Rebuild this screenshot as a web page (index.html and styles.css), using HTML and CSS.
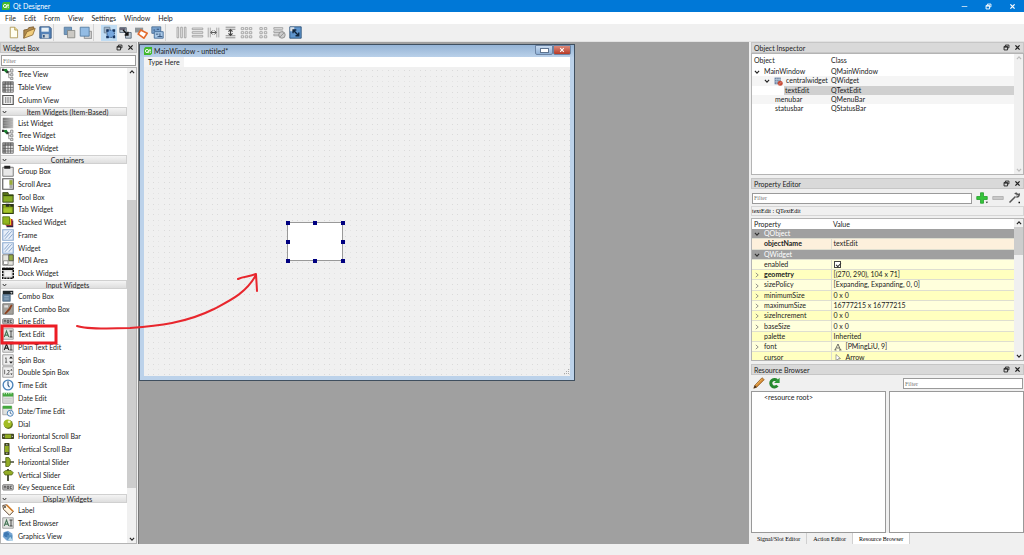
FILE: index.html
```html
<!DOCTYPE html>
<html lang="en">
<head>
  <meta charset="UTF-8" />
  <meta name="viewport" content="width=device-width, initial-scale=1.0"/>
  <title>Qt Designer</title>
  <link rel="stylesheet" href="styles.css">
</head>
<body>

<!-- icon sprites -->
<svg class="sprites" aria-hidden="true">
  <symbol id="qt" viewBox="0 0 16 16"><path fill="#41b82c" d="M3 0h13v13l-3 3H0V3z"/><circle cx="6" cy="8" r="3.2" fill="none" stroke="#fff" stroke-width="1.8"/><path d="M7 9l2.5 3.5M12 4v6.500q0 1 2 1M10 6.500h4" fill="none" stroke="#fff" stroke-width="1.600"/></symbol>
  <symbol id="float" viewBox="0 0 10 10"><path d="M3.500 3V1.500h5v4H7M1.500 3.500h5v5h-5zM1.500 4.500h5" fill="none" stroke="currentColor" stroke-width="1.300"/></symbol>
  <symbol id="close" viewBox="0 0 10 10"><path d="M2 2l6 6M8 2L2 8" fill="none" stroke="currentColor" stroke-width="1.800"/></symbol>
  <symbol id="down" viewBox="0 0 10 10"><path d="M1.500 3L5 7l3.500-4" fill="none" stroke="currentColor" stroke-width="1.800"/></symbol>
  <symbol id="up" viewBox="0 0 10 10"><path d="M1.500 7L5 3l3.500 4" fill="none" stroke="currentColor" stroke-width="1.800"/></symbol>
  <symbol id="right" viewBox="0 0 10 10"><path d="M3 1.500L7 5 3 8.500" fill="none" stroke="currentColor" stroke-width="1.300"/></symbol>

  <symbol id="new" viewBox="0 0 16 16"><path d="M4 1.500h5.500L13 5v9.500H4z" fill="#fffef0" stroke="#a9924a"/><path d="M9.500 1.500V5H13" fill="#f3dd90" stroke="#a9924a"/></symbol>
  <symbol id="open" viewBox="0 0 16 16"><path d="M1 15V5l5-1 1-2 6-1 1 4-9 3z" fill="#b08a4c" stroke="#76562a"/><path d="M1 15L5 7l10-4-3 8z" fill="#f0cc7c" stroke="#8c6a34"/></symbol>
  <symbol id="save" viewBox="0 0 16 16"><path d="M1 1h12l2 2v12H1z" fill="#5583b8" stroke="#2c4f7b"/><path d="M3 2h9v5H3z" fill="#e9f1f5"/><path d="M4 10h8v5H4z" fill="#c8d2da"/><path d="M5 11h2v3H5z" fill="#2c4f7b"/></symbol>
  <symbol id="back" viewBox="0 0 16 16"><path d="M1.500 1.500h9v9h-9z" fill="#7299be" stroke="#53789c"/><path d="M5.500 5.500h9v9h-9z" fill="#cbc9c4" stroke="#81827f"/></symbol>
  <symbol id="front" viewBox="0 0 16 16"><path d="M6.500 6.500h9v9h-9z" fill="#ccc" stroke="#8a8a8a"/><path d="M1.500 1.500h11v11h-11z" fill="#93bce4" stroke="#4d769e"/></symbol>
  <symbol id="editwidgets" viewBox="0 0 16 16"><path d="M1.500 1.500h7v7h-7z" fill="#a5b8ca" stroke="#667b90"/><path d="M5 5h9v9H5z" fill="#77a8df" stroke="#23436b" stroke-dasharray="2 1"/><path d="M4 4h3v3H4zM12 4h3v3h-3zM4 12h3v3H4zM12 12h3v3h-3z" fill="#18355f"/></symbol>
  <symbol id="signals" viewBox="0 0 16 16"><path d="M1 2h8v6H1zM8 8h7v7H8z" fill="#b9c4ce" stroke="#526273"/><path d="M1 2h7v3H1z" fill="#667"/><path d="M5 5l6 6M11 7v4H7" fill="none" stroke="#111" stroke-width="1.800"/></symbol>
  <symbol id="buddies" viewBox="0 0 16 16"><path d="M0 2h10v6H0z" fill="#8e9498"/><path d="M7 5l8 4-4 6-7-5z" fill="#fff" stroke="#e46c2e" stroke-width="2"/></symbol>
  <symbol id="taborder" viewBox="0 0 16 16"><path d="M1 1h11v8H1z" fill="#7ba3ce" stroke="#476a91"/><path d="M4 7h11v8H4z" fill="#a9c9e8" stroke="#37618f"/><path d="M3 5h2M7 4h3M6 10h3M11 9v4M8 13h6" stroke="#213f68"/></symbol>
  <symbol id="layh" viewBox="0 0 16 16"><path d="M2.500 1.500h2v13h-2zM7 1.500h2v13H7zM11.500 1.500h2v13h-2z" fill="#eee" stroke="#999"/></symbol>
  <symbol id="layv" viewBox="0 0 16 16"><path d="M1.500 2.500h13v2h-13zM1.500 7h13v2h-13zM1.500 11.500h13v2h-13z" fill="#eee" stroke="#999"/></symbol>
  <symbol id="splith" viewBox="0 0 16 16"><path d="M1.500 2v12M4 2v12M12 2v12M14.500 2v12" stroke="#999"/><path d="M5 8h6M7 5.500L4.500 8 7 10.500M9 5.500L11.500 8 9 10.500" fill="none" stroke="#555" stroke-width="1.200"/></symbol>
  <symbol id="splitv" viewBox="0 0 16 16"><path d="M2 1.500h12M2 4h12M2 12h12M2 14.500h12" stroke="#777"/><path d="M8 4v8M5.500 7L8 4.500 10.500 7M5.500 9L8 11.500 10.500 9" fill="none" stroke="#444" stroke-width="1.400"/></symbol>
  <symbol id="grid" viewBox="0 0 16 16"><path d="M1.500 2h3v2.500h-3zM6.500 2h3v2.500h-3zM11.500 2h3v2.500h-3zM1.500 7h3v2.500h-3zM6.500 7h3v2.500h-3zM11.500 7h3v2.500h-3zM1.500 12h3v2.500h-3zM6.500 12h3v2.500h-3zM11.500 12h3v2.500h-3z" fill="#f4f4f4" stroke="#999"/></symbol>
  <symbol id="form" viewBox="0 0 16 16"><path d="M3.500 2h3v2.500h-3zM9 2h3v2.500H9zM3.500 7h3v2.500h-3zM9 7h3v2.500H9zM3.500 12h3v2.500h-3zM9 12h3v2.500H9z" fill="#f4f4f4" stroke="#999"/></symbol>
  <symbol id="break" viewBox="0 0 16 16"><path d="M1 2h11v2H1zM1 6h11v2H1zM1 10h7v2H1z" fill="#eee" stroke="#999"/><circle cx="11" cy="11" r="4" fill="#ccc" stroke="#888"/><path d="M8.500 13.500l5-5" stroke="#888"/></symbol>
  <symbol id="adjust" viewBox="0 0 16 16"><path d="M1 1h14v14H1z" fill="#5e94cc" stroke="#20476f"/><path d="M1.500 1.500h5v5h-5z" fill="#d9dfe4"/><path d="M5 5l7 7M12 8v4H8M5 9V5h4" fill="none" stroke="#10253d" stroke-width="1.700"/></symbol>

  <symbol id="tree" viewBox="0 0 16 16"><path d="M1 2l5-1 2 3-2 3z" fill="#16852c"/><path d="M0 1h3v3H0zM6 4h3v3H6z" fill="#333"/><path d="M8 5h3M9 5v8h2M9 9h2" stroke="#777" fill="none"/><path d="M11.500 1.500h3v4h-3zM11.500 7.500h3v3h-3zM11.500 12.500h3v3h-3z" fill="#e8e8e8" stroke="#777"/></symbol>
  <symbol id="table" viewBox="0 0 16 16"><path d="M1 1h14v14H1z" fill="#e3e3e3" stroke="#555"/><path d="M1 1h14v3H1zM1 1h3v14H1z" fill="#8b8b8b"/><path d="M1 4.500h14M1 8.500h14M1 12h14M4.500 1v14M8 1v14M11.500 1v14" stroke="#555"/></symbol>
  <symbol id="column" viewBox="0 0 16 16"><path d="M1 2h14v12H1z" fill="#eee" stroke="#555" stroke-width="1.500"/><path d="M5 4v8M8 4v8M11 4v8" stroke="#777" stroke-width="1.300"/></symbol>
  <symbol id="list" viewBox="0 0 16 16"><linearGradient id="fade"><stop stop-color="#707070"/><stop offset="1" stop-color="#c4c4c4"/></linearGradient><path d="M1 1h14v14H1z" fill="url(#fade)"/><path d="M2 4.500h12M2 8h12M2 11.500h12" stroke="#a8a8a8"/></symbol>
  <symbol id="group" viewBox="0 0 16 16"><path d="M1 3h14v12H1z" fill="#e8e8e8" stroke="#555"/><path d="M3 1h8v4H3z" fill="#222"/></symbol>
  <symbol id="scroll" viewBox="0 0 16 16"><path d="M1 1h14v14H1z" fill="#fff" stroke="#555" stroke-width="1.500"/><path d="M10 2h4v12h-4z" fill="#aaa"/><path d="M10 3h4v6h-4z" fill="#9bad38"/></symbol>
  <symbol id="toolbox" viewBox="0 0 16 16"><path d="M1 2h7l1 3h6v10H1z" fill="#567317" stroke="#303f14"/><path d="M2 7h12v7H2z" fill="#88ad27"/><path d="M2 6h13" stroke="#293a0c"/></symbol>
  <symbol id="tab" viewBox="0 0 16 16"><path d="M1 2h14v12H1z" fill="#8eae1b" stroke="#303f14" stroke-width="1.500"/><path d="M5 1h5v4H5zM11 2h4v3h-4z" fill="#282d20"/><path d="M2 7h11v5H2z" fill="#a6c62c"/></symbol>
  <symbol id="stack" viewBox="0 0 16 16"><path d="M6 6h9v9H6z" fill="#2b2442"/><path d="M5 4h9v9H5z" fill="#b3342f"/><path d="M4 3h8v9H4z" fill="#e4cd1f"/><path d="M1 1h9v10H1z" fill="#91b51e" stroke="#4b6915"/></symbol>
  <symbol id="frame" viewBox="0 0 16 16"><path d="M1 1h14v14H1z" fill="#e8eff9" stroke="#8caad0" stroke-width="1.500"/><path d="M3 10l6-7M4 13l9-10M9 13l5-6" stroke="#88a6cb" stroke-width="1.300"/></symbol>
  <symbol id="mdi" viewBox="0 0 16 16"><path d="M1 1h14v14H1z" fill="#e5e5df" stroke="#666"/><path d="M9 1h6v8H9z" fill="#98ae45" stroke="#444"/><path d="M2 9h6v5H2z" fill="#fff" stroke="#777"/></symbol>
  <symbol id="dock" viewBox="0 0 16 16"><path d="M1 2h14v13H1z" fill="#ddd" stroke="#111" stroke-width="2" stroke-dasharray="3 1"/><path d="M1 1h14v3H1z" fill="#111"/><path d="M4 6h8v6H4z" fill="#f4f4f4"/></symbol>
  <symbol id="combo" viewBox="0 0 16 16"><path d="M1 1h14v5H1z" fill="#20272b"/><path d="M1 6h10v9H1z" fill="#6785a1" stroke="#4c657c"/><path d="M11 3h3l-1.500 2z" fill="#fff"/><path d="M3 9h6M3 12h6" stroke="#a9c0d5"/></symbol>
  <symbol id="fontcombo" viewBox="0 0 16 16"><path d="M1 1h14v14H1z" fill="#a4a19b" stroke="#666"/><path d="M3 14L9 7l3-5 2 1-3 6-6 6z" fill="#8d401e"/><path d="M3 3h5v3H3z" fill="#ddd"/></symbol>
  <symbol id="line" viewBox="0 0 16 16"><rect x="1" y="5" width="14" height="7" rx="1" fill="#cfcfcf" stroke="#555"/><path d="M3 10V7h2v3M7 7v3h2V7zM13 7h-2v3h2" fill="none" stroke="#333"/></symbol>
  <symbol id="text" viewBox="0 0 16 16"><path d="M1 1h14v14H1z" fill="#e3e6e2" stroke="#8b8b8b"/><path d="M3 12L6 4l3 8M4 9.500h4" fill="none" stroke="#477657" stroke-width="1.500"/><path d="M10 4h4M12 4v8M10 12h4" stroke="#333" stroke-width="1.200"/></symbol>
  <symbol id="plain" viewBox="0 0 16 16"><path d="M1 1h14v14H1z" fill="#e5e5e5" stroke="#8b8b8b"/><path d="M3 12L6 4l3 8M4 9.500h4" fill="none" stroke="#222" stroke-width="1.500"/><path d="M10 4h4M12 4v8M10 12h4" stroke="#333" stroke-width="1.200"/></symbol>
  <symbol id="spin" viewBox="0 0 16 16"><path d="M1 1h14v14H1z" fill="#eee" stroke="#888"/><path d="M4 6l1.500-1v6M4 11h3" fill="none" stroke="#444"/><path d="M9.500 6L12 3l2.500 3zM9.500 10L12 13l2.500-3z" fill="#222"/></symbol>
  <symbol id="dspin" viewBox="0 0 16 16"><path d="M1 1h14v14H1z" fill="#eee" stroke="#888"/><path d="M3.500 5v6M5.500 11h1M7 6h2.500v2L7 11h3" fill="none" stroke="#444"/><path d="M11 6l1.500-2L14 6zM11 10l1.500 2 1.500-2z" fill="#222"/></symbol>
  <symbol id="time" viewBox="0 0 16 16"><circle cx="8" cy="8" r="6.500" fill="#f4f9ff" stroke="#4a82b8" stroke-width="1.800"/><path d="M8 3v5l2 3" fill="none" stroke="#234c76" stroke-width="1.400"/></symbol>
  <symbol id="date" viewBox="0 0 16 16"><path d="M1 2h14v13H1z" fill="#dfe2df" stroke="#999"/><path d="M1 1h14v5H1z" fill="#43a83d"/><path d="M3 1v2M6 1v2M9 1v2M12 1v2" stroke="#fff"/><path d="M3 9h10M3 12h10" stroke="#bbb"/></symbol>
  <symbol id="datetime" viewBox="0 0 16 16"><path d="M1 2h12v11H1z" fill="#dfe2df" stroke="#999"/><path d="M1 1h12v4H1z" fill="#43a83d"/><circle cx="11" cy="11" r="4" fill="#f4f9ff" stroke="#4a82b8" stroke-width="1.300"/><path d="M11 8.500V11l2 1" fill="none" stroke="#234c76"/></symbol>
  <symbol id="dial" viewBox="0 0 16 16"><circle cx="8.500" cy="8.500" r="6" fill="#5d711a"/><circle cx="7.500" cy="7.500" r="5.500" fill="#a2bd24"/><circle cx="9.500" cy="5" r="1.800" fill="#eef3b8"/></symbol>
  <symbol id="hscroll" viewBox="0 0 16 16"><rect x="0" y="5" width="16" height="7" rx="1" fill="#3f461f"/><path d="M4 6h8v5H4z" fill="#91ad22"/><path d="M3 7v3L1 8.500zM13 7v3l2-1.500z" fill="#ccc"/></symbol>
  <symbol id="vscroll" viewBox="0 0 16 16"><rect x="3" y="0" width="7" height="16" rx="1" fill="#3f461f"/><path d="M4 4h5v8H4z" fill="#91ad22"/><path d="M5 3h3L6.500 1zM5 13h3l-1.500 2z" fill="#ccc"/></symbol>
  <symbol id="hslider" viewBox="0 0 16 16"><path d="M0 8h16" stroke="#464b36" stroke-width="2"/><path d="M5 2h4l2 3v6l-2 3H5z" fill="#93ad26" stroke="#4b5d14"/></symbol>
  <symbol id="vslider" viewBox="0 0 16 16"><path d="M8 0v16" stroke="#464b36" stroke-width="2.500"/><path d="M2 4l3-2h7l3 3-2 3H4z" fill="#93ad26" stroke="#4b5d14"/></symbol>
  <symbol id="label" viewBox="0 0 16 16"><path d="M1 2l5-1 9 9-5 5-8-8z" fill="#fff4df" stroke="#5b4634" stroke-width="1.300"/><path d="M6 1l9 9" stroke="#d07a28" stroke-width="2"/><circle cx="4" cy="4" r="1.200" fill="#333"/></symbol>
  <symbol id="graphics" viewBox="0 0 16 16"><path d="M2 3l6-2 6 4-1 8-7 1-5-5z" fill="#75a5d3"/><circle cx="6" cy="6" r="3.500" fill="#3f79b2"/><path d="M7 7h7v7H7z" fill="#5691bf"/><path d="M8 13l3-4 4 6z" fill="#b7d8ed"/></symbol>

  <symbol id="central" viewBox="0 0 16 16"><path d="M1 1h11v12H1z" fill="#7089a8"/><path d="M1 4.500h11M1 8.500h11M5 1v12M9 1v12" stroke="#cfd9e5"/><circle cx="11" cy="11" r="4.500" fill="#c84b36"/><path d="M8 14l6-6" stroke="#e8b6ae"/></symbol>
  <symbol id="plus" viewBox="0 0 16 16"><path d="M6 1h4v5h5v4h-5v5H6v-5H1V6h5z" fill="#35c43a" stroke="#1d9b26"/><path d="M13 13h3l-1.500 2z" fill="#111"/></symbol>
  <symbol id="minus" viewBox="0 0 16 16"><path d="M1 6h14v4H1z" fill="#c8c8c8" stroke="#aaa"/></symbol>
  <symbol id="wrench" viewBox="0 0 16 16"><path d="M2 14l8-8M9 2.500q3-2 3 1l3-.5q0 4-4 3.500" fill="none" stroke="#555" stroke-width="2"/><path d="M14 13h2v2h-2z" fill="#111"/></symbol>
  <symbol id="pencil" viewBox="0 0 16 16"><path d="M1 15l1.500-4L12 1l3 2.500L5 13.500z" fill="#d58a35" stroke="#91602b"/><path d="M1 15l1.500-4L5 13.500z" fill="#3b2a1c"/><path d="M4 11l8-8" stroke="#f4c36c"/></symbol>
  <symbol id="reload" viewBox="0 0 16 16"><path d="M12.500 11.500A5 5 0 1 1 12 4.500" fill="none" stroke="#25882e" stroke-width="4"/><path d="M8 8h7.500V1z" fill="#2b9835"/></symbol>
  <symbol id="fonta" viewBox="0 0 16 16"><path d="M2 14L8 2l5 12M5 10h6M1 14h4M10 14h5" fill="none" stroke="#444" stroke-width="1.500"/></symbol>
  <symbol id="pointer" viewBox="0 0 16 16"><path d="M4 1v12l3-3 2 5 2-1-2-5h4z" fill="#fff" stroke="#555"/></symbol>
</svg>

<header class="titlebar">
  <svg class="app-icon"><use href="#qt"/></svg>
  <h1>Qt Designer</h1>
  <button aria-label="Minimize"><svg viewBox="0 0 10 10"><path d="M1 5h8" stroke="#fff"/></svg></button>
  <button aria-label="Restore"><svg><use href="#float"/></svg></button>
  <button aria-label="Close"><svg><use href="#close"/></svg></button>
</header>

<nav class="menubar">
  <button>File</button><button>Edit</button><button>Form</button><button>View</button><button>Settings</button><button>Window</button><button>Help</button>
</nav>

<div class="toolbar">
  <div class="tools">
    <button aria-label="New"><svg><use href="#new"/></svg></button>
    <button aria-label="Open"><svg><use href="#open"/></svg></button>
    <button aria-label="Save"><svg><use href="#save"/></svg></button>
  </div>
  <div class="tools">
    <button aria-label="Send to Back"><svg><use href="#back"/></svg></button>
    <button aria-label="Bring to Front"><svg><use href="#front"/></svg></button>
  </div>
  <div class="tools">
    <button class="checked" aria-label="Edit Widgets"><svg><use href="#editwidgets"/></svg></button>
    <button aria-label="Edit Signals/Slots"><svg><use href="#signals"/></svg></button>
    <button aria-label="Edit Buddies"><svg><use href="#buddies"/></svg></button>
    <button aria-label="Edit Tab Order"><svg><use href="#taborder"/></svg></button>
  </div>
  <div class="tools layouts">
    <button aria-label="Lay Out Horizontally"><svg><use href="#layh"/></svg></button>
    <button aria-label="Lay Out Vertically"><svg><use href="#layv"/></svg></button>
    <button aria-label="Horizontal Splitter"><svg><use href="#splith"/></svg></button>
    <button aria-label="Vertical Splitter"><svg><use href="#splitv"/></svg></button>
    <button aria-label="Lay Out in a Grid"><svg><use href="#grid"/></svg></button>
    <button aria-label="Lay Out in a Form"><svg><use href="#form"/></svg></button>
    <button aria-label="Break Layout"><svg><use href="#break"/></svg></button>
    <button aria-label="Adjust Size"><svg><use href="#adjust"/></svg></button>
  </div>
</div>

<main class="workspace">
  <aside class="dock widget-box">
    <div class="dock-title"><h2>Widget Box</h2><button aria-label="Float"><svg><use href="#float"/></svg></button><button aria-label="Close"><svg><use href="#close"/></svg></button></div>
    <input class="filter" type="text" placeholder="Filter" aria-label="Filter widgets">
    <div class="scroller">
      <ul class="widgets">
        <li><svg><use href="#tree"/></svg>Tree View</li>
        <li><svg><use href="#table"/></svg>Table View</li>
        <li><svg><use href="#column"/></svg>Column View</li>
        <li class="category"><button><svg><use href="#down"/></svg>Item Widgets (Item-Based)</button></li>
        <li><svg><use href="#list"/></svg>List Widget</li>
        <li><svg><use href="#tree"/></svg>Tree Widget</li>
        <li><svg><use href="#table"/></svg>Table Widget</li>
        <li class="category"><button><svg><use href="#down"/></svg>Containers</button></li>
        <li><svg><use href="#group"/></svg>Group Box</li>
        <li><svg><use href="#scroll"/></svg>Scroll Area</li>
        <li><svg><use href="#toolbox"/></svg>Tool Box</li>
        <li><svg><use href="#tab"/></svg>Tab Widget</li>
        <li><svg><use href="#stack"/></svg>Stacked Widget</li>
        <li><svg><use href="#frame"/></svg>Frame</li>
        <li><svg><use href="#frame"/></svg>Widget</li>
        <li><svg><use href="#mdi"/></svg>MDI Area</li>
        <li><svg><use href="#dock"/></svg>Dock Widget</li>
        <li class="category"><button><svg><use href="#down"/></svg>Input Widgets</button></li>
        <li><svg><use href="#combo"/></svg>Combo Box</li>
        <li><svg><use href="#fontcombo"/></svg>Font Combo Box</li>
        <li><svg><use href="#line"/></svg>Line Edit</li>
        <li><svg><use href="#text"/></svg>Text Edit</li>
        <li><svg><use href="#plain"/></svg>Plain Text Edit</li>
        <li><svg><use href="#spin"/></svg>Spin Box</li>
        <li><svg><use href="#dspin"/></svg>Double Spin Box</li>
        <li><svg><use href="#time"/></svg>Time Edit</li>
        <li><svg><use href="#date"/></svg>Date Edit</li>
        <li><svg><use href="#datetime"/></svg>Date/Time Edit</li>
        <li><svg><use href="#dial"/></svg>Dial</li>
        <li><svg><use href="#hscroll"/></svg>Horizontal Scroll Bar</li>
        <li><svg><use href="#vscroll"/></svg>Vertical Scroll Bar</li>
        <li><svg><use href="#hslider"/></svg>Horizontal Slider</li>
        <li><svg><use href="#vslider"/></svg>Vertical Slider</li>
        <li><svg><use href="#line"/></svg>Key Sequence Edit</li>
        <li class="category"><button><svg><use href="#down"/></svg>Display Widgets</button></li>
        <li><svg><use href="#label"/></svg>Label</li>
        <li><svg><use href="#text"/></svg>Text Browser</li>
        <li><svg><use href="#graphics"/></svg>Graphics View</li>
      </ul>
      <div class="scrollbar widgets-bar"><svg><use href="#up"/></svg><span class="track"><span class="thumb"></span></span><svg><use href="#down"/></svg></div>
    </div>
  </aside>

  <section class="mdi">
    <div class="window">
      <div class="window-title">
        <svg><use href="#qt"/></svg>
        <h2>MainWindow - untitled*</h2>
        <button class="min" aria-label="Minimize form"></button>
        <button class="shut" aria-label="Close form"><svg><use href="#close"/></svg></button>
      </div>
      <div class="form-menu"><button>Type Here</button></div>
      <div class="canvas">
        <svg class="dots" aria-hidden="true">
          <defs>
            <pattern id="dotgrid" width="16" height="16" patternUnits="userSpaceOnUse">
              <path d="M4 3h1v1H4zM9 3h1v1H9zM4 9h1v1H4zM9 9h1v1H9z" fill="#dadada"/>
              <path d="M14 3h1v1h-1zM14 9h1v1h-1zM4 14h1v1H4zM9 14h1v1H9zM14 14h1v1h-1z" fill="#e3e3e3"/>
            </pattern>
          </defs>
          <rect width="100%" height="100%" fill="url(#dotgrid)"/>
        </svg>
        <div class="selected-widget">
          <textarea aria-label="textEdit"></textarea>
          <i class="n w"></i><i class="n c"></i><i class="n e"></i>
          <i class="m w"></i><i class="m e"></i>
          <i class="s w"></i><i class="s c"></i><i class="s e"></i>
        </div>
        <svg class="grip" viewBox="0 0 6 6"><path d="M5 0h1v1H5zM3 2h1v1H3zM5 2h1v1H5zM1 4h1v1H1zM3 4h1v1H3zM5 4h1v1H5z" fill="#aaa"/></svg>
      </div>
    </div>
  </section>

  <aside class="right">
    <section class="dock inspector">
      <div class="dock-title"><h2>Object Inspector</h2><button aria-label="Float"><svg><use href="#float"/></svg></button><button aria-label="Close"><svg><use href="#close"/></svg></button></div>
      <div class="scroller">
        <div class="pane">
          <table class="objects">
            <thead><tr><th>Object</th><th>Class</th></tr></thead>
            <tbody>
              <tr><td><svg class="arrow"><use href="#down"/></svg>MainWindow</td><td>QMainWindow</td></tr>
              <tr class="alt"><td class="child"><svg class="arrow"><use href="#down"/></svg><svg class="kind"><use href="#central"/></svg>centralwidget</td><td>QWidget</td></tr>
              <tr class="current"><td class="leaf">textEdit</td><td>QTextEdit</td></tr>
              <tr class="alt"><td class="bar">menubar</td><td>QMenuBar</td></tr>
              <tr><td class="bar">statusbar</td><td>QStatusBar</td></tr>
            </tbody>
          </table>
        </div>
        <div class="scrollbar off"><svg><use href="#up"/></svg><span class="track"></span><svg><use href="#down"/></svg></div>
      </div>
    </section>

    <section class="dock properties">
      <div class="dock-title"><h2>Property Editor</h2><button aria-label="Float"><svg><use href="#float"/></svg></button><button aria-label="Close"><svg><use href="#close"/></svg></button></div>
      <div class="property-tools">
        <input class="filter" type="text" placeholder="Filter" aria-label="Filter properties">
        <button aria-label="Add property"><svg><use href="#plus"/></svg></button>
        <button aria-label="Remove property"><svg><use href="#minus"/></svg></button>
        <button aria-label="Configure"><svg><use href="#wrench"/></svg></button>
      </div>
      <p class="object-name">textEdit : QTextEdit</p>
      <div class="scroller">
        <div class="pane">
          <table class="props">
            <thead><tr><th>Property</th><th>Value</th></tr></thead>
            <tbody>
              <tr class="head"><td colspan="2"><svg class="arrow"><use href="#down"/></svg>QObject</td></tr>
              <tr class="peach"><td class="set">objectName</td><td>textEdit</td></tr>
              <tr class="head"><td colspan="2"><svg class="arrow"><use href="#down"/></svg>QWidget</td></tr>
              <tr><td><label for="enabled">enabled</label></td><td><input type="checkbox" id="enabled" checked></td></tr>
              <tr class="deep"><td class="set"><svg class="arrow"><use href="#right"/></svg>geometry</td><td>[(270, 290), 104 x 71]</td></tr>
              <tr><td><svg class="arrow"><use href="#right"/></svg>sizePolicy</td><td>[Expanding, Expanding, 0, 0]</td></tr>
              <tr class="deep"><td><svg class="arrow"><use href="#right"/></svg>minimumSize</td><td>0 x 0</td></tr>
              <tr><td><svg class="arrow"><use href="#right"/></svg>maximumSize</td><td>16777215 x 16777215</td></tr>
              <tr class="deep"><td><svg class="arrow"><use href="#right"/></svg>sizeIncrement</td><td>0 x 0</td></tr>
              <tr><td><svg class="arrow"><use href="#right"/></svg>baseSize</td><td>0 x 0</td></tr>
              <tr class="deep"><td>palette</td><td>Inherited</td></tr>
              <tr><td><svg class="arrow"><use href="#right"/></svg>font</td><td><svg class="kind"><use href="#fonta"/></svg>[PMingLiU, 9]</td></tr>
              <tr class="deep"><td>cursor</td><td><svg class="kind"><use href="#pointer"/></svg>Arrow</td></tr>
            </tbody>
          </table>
        </div>
        <div class="scrollbar props-bar"><svg><use href="#up"/></svg><span class="track"><span class="thumb"></span></span><svg><use href="#down"/></svg></div>
      </div>
    </section>

    <section class="dock resources">
      <div class="dock-title"><h2>Resource Browser</h2><button aria-label="Float"><svg><use href="#float"/></svg></button><button aria-label="Close"><svg><use href="#close"/></svg></button></div>
      <div class="resource-tools">
        <button aria-label="Edit Resources"><svg><use href="#pencil"/></svg></button>
        <button aria-label="Reload"><svg><use href="#reload"/></svg></button>
        <input class="filter" type="text" placeholder="Filter" aria-label="Filter resources">
      </div>
      <div class="resource-panes">
        <div class="box">&lt;resource root&gt;</div>
        <div class="box"></div>
      </div>
      <div class="tabs">
        <button>Signal/Slot Editor</button>
        <button>Action Editor</button>
        <button class="open">Resource Browser</button>
      </div>
    </section>
  </aside>

  <!-- drag hint: Text Edit goes onto the form -->
  <svg class="hint" viewBox="0 0 262 90" aria-hidden="true">
    <rect x="2" y="65" width="54" height="17" fill="none" stroke="#ec1c24" stroke-width="3"/>
    <path d="M77 65C85 68 103 68 130 67C158 65 186 62 214 48C231 39 246 32 256 14M238 18C244 15 250 16 256 13L257 30" fill="none" stroke="#e8262d" stroke-width="2" stroke-linejoin="round" stroke-linecap="round"/>
  </svg>
</main>

<footer class="statusbar"></footer>

</body>
</html>
```
FILE: styles.css
```css
* { box-sizing: border-box; }
body {
  display: flex;
  flex-direction: column;
  height: 100vh;
  margin: 0;
  overflow: hidden;
  background: #f0f0f0;
  color: #222;
  font: 7px/10px Lato, "Open Sans", sans-serif;
}
h1, h2, p, ul { margin: 0; padding: 0; font-size: 7px; font-weight: normal; }
button { padding: 0; border: 0; background: none; color: inherit; font: inherit; }
svg { flex: none; width: 12px; height: 12px; }
.sprites { position: absolute; width: 0; height: 0; }

/* top bars */
.titlebar { display: flex; align-items: center; height: 12px; padding-left: 2px; background: #0078d7; color: #fff; }
.titlebar h1 { flex: 1; padding-left: 3px; }
.titlebar svg { width: 7px; height: 7px; display: block; margin: auto; }
.titlebar .app-icon { width: 8px; height: 8px; margin: 0; }
.titlebar button { width: 24px; }
.menubar { display: flex; height: 12px; padding-left: 1px; background: #fff; }
.menubar button { padding: 0 4px; }
.toolbar { display: flex; height: 18px; border-bottom: 1px solid #e2e2e2; }
.tools { display: flex; align-items: center; padding-left: 5px; border-right: 1px solid #d2d2d2; margin-right: 2px; }
.tools button { width: 16px; height: 16px; }
.tools svg { display: block; width: 13px; height: 13px; margin: auto; }
.tools .checked { background: #c0dcf3; }
.layouts { border-right: 0; width: 136px; }
.layouts button { flex: 1; }

/* docks */
.workspace { position: relative; display: flex; flex: 1; min-height: 0; }
.dock { display: flex; flex-direction: column; min-height: 0; }
.dock-title { display: flex; align-items: center; flex: none; height: 11px; padding-left: 2px; background: #d9d9d9; border: 1px solid #c6c6c6; }
.dock-title h2 { flex: 1; }
.dock-title button { width: 11px; height: 8px; }
.dock-title svg { display: block; width: 7px; height: 7px; margin: auto; }
.filter { height: 11px; min-width: 0; padding: 0 1px; border: 1px solid #9a9a9a; background: #fff; font: 6px/9px "Liberation Serif", serif; }
.filter::placeholder { color: #777; }
.scroller { display: flex; flex: 1; min-height: 0; background: #fff; border: 1px solid #b4b4b4; }
.pane { flex: 1; min-width: 0; overflow: hidden; }
.scrollbar { display: flex; flex-direction: column; align-items: center; flex: none; width: 9px; background: #f0f0f0; }
.scrollbar svg { width: 6px; height: 8px; }
.scrollbar.off { color: #bbb; }
.track { display: flex; flex-direction: column; flex: 1; width: 100%; }
.thumb { background: #cdcdcd; }
.widgets-bar .track { justify-content: flex-end; padding-bottom: 47px; }
.widgets-bar .thumb { height: 70%; }
.props-bar .thumb { height: 28px; }

.widget-box { width: 137px; }
.widget-box .filter { margin: 2px 1px 1px; }
.widgets { display: flex; flex-direction: column; flex: 1; padding-bottom: 1px; list-style: none; }
.widgets li { display: flex; align-items: center; flex: 1; gap: 4px; padding-left: 1px; white-space: nowrap; }
.widgets .category { flex: none; height: 10px; padding: 0; }
.category button { position: relative; width: 100%; height: 9px; padding-left: 8px; line-height: 8px; border: 1px solid #d0d0d0; border-left: 0; background: linear-gradient(#f4f4f4, #dedede); }
.category svg { position: absolute; left: 1px; top: 1px; width: 5px; height: 6px; }

/* form window */
.mdi { position: relative; flex: 1; margin: 0 2px 0 1px; background: #a0a0a0; border-left: 1px solid #777; overflow: hidden; }
.window { position: absolute; left: 0; top: 2px; display: flex; flex-direction: column; width: 436px; height: 337px; padding: 0 4px 4px; background: #bcd2ea; border: 1px solid #3f4f5f; }
.window-title { display: flex; align-items: center; height: 12px; margin: 0 -4px; padding: 0 3px 0 4px; background: linear-gradient(#95b4d6, #b9d0e9); }
.window-title svg { width: 8px; height: 8px; }
.window-title h2 { flex: 1; padding-left: 2px; }
.window-title button { display: flex; align-items: center; justify-content: center; align-self: flex-start; width: 18px; height: 10px; border: 1px solid #6b83a3; border-radius: 0 0 2px 2px; }
.min { background: linear-gradient(#c6d9ee, #8fb0d6); }
.min::after { content: ""; width: 7px; height: 3px; border: 1px solid #5d7390; background: #fff; }
.window-title .shut { color: #fff; background: linear-gradient(#dd8a7b, #b83a26); }
.shut svg { width: 6px; height: 6px; }
.form-menu { height: 10px; background: #fff; }
.form-menu button { display: block; height: 10px; padding: 0 4px; background: #f3f3f3; }
.canvas { position: relative; flex: 1; background: #f0f0f0; }
.dots { display: block; width: 100%; height: 100%; }
.selected-widget { position: absolute; left: 143px; top: 155px; width: 56px; height: 39px; }
.selected-widget textarea { display: block; width: 100%; height: 100%; padding: 0; border: 1px solid #999; background: #fff; resize: none; }
.selected-widget i { position: absolute; width: 4px; height: 4px; margin: -2px; background: #000080; }
.n { top: 1px; }
.m { top: 50%; }
.s { top: 100%; }
.w { left: 1px; }
.c { left: 50%; }
.e { left: 100%; }
.grip { position: absolute; right: 1px; bottom: 1px; width: 6px; height: 6px; }

/* right column */
.right { display: flex; flex-direction: column; gap: 3px; width: 273px; }
.inspector { flex: 133; }
.properties { flex: 183; }
.resources { flex: 180; }
table { width: 100%; border-collapse: collapse; table-layout: fixed; }
th, td { padding: 0 0 0 2px; font-weight: normal; text-align: left; white-space: nowrap; line-height: 9px; }
.arrow { width: 6px; height: 6px; margin-right: 4px; vertical-align: middle; }
.objects th:first-child { width: 77px; }
.objects th { height: 13px; }
.objects .alt { background: #f5f5f5; }
.objects .current { background: linear-gradient(90deg, #fff 32px, #d0d0d0 32px); }
.objects .child { padding-left: 12px; }
.objects .kind { width: 9px; height: 9px; margin-right: 3px; vertical-align: middle; }
.objects .leaf { padding-left: 33px; }
.objects .bar { padding-left: 23px; }

.property-tools { display: flex; align-items: center; gap: 4px; padding: 3px 4px 2px 1px; }
.property-tools .filter { flex: 1; }
.property-tools button { height: 12px; }
.object-name { height: 10px; margin-bottom: 2px; border: 1px solid #d5d5d5; font: 6px/8px "Liberation Serif", serif; color: #000; }
/* last row runs under the lower edge of the pane */
.props { height: calc(100% + 3px); }
.props th { height: 10px; }
.props th:first-child { width: 79px; }
.props td { height: 9px; padding-left: 12px; border-bottom: 1px solid #deded0; background: #ffffdc; }
.props td + td { padding-left: 2px; border-left: 1px solid #deded0; }
.props .arrow { margin: 0 4px 0 -10px; color: #777; }
.props .head td { background: #a0a0a0; color: #fff; }
.props .head .arrow { color: #333; }
.props .peach td { background: #fdf0dc; }
.props .deep td { background: #ffffbf; }
.props .set { font-weight: bold; }
.props .kind { width: 8px; height: 8px; margin: 0 4px 0 0; vertical-align: middle; }
.props input { display: block; appearance: none; width: 7px; height: 7px; margin: 0; border: 1px solid #444; background: #fff; }
.props input:checked::after { content: ""; display: block; width: 4px; height: 2px; margin: 1px 0 0 1px; border: solid #333; border-width: 0 0 1px 1px; transform: rotate(-45deg); }

.resource-tools { display: flex; align-items: center; gap: 3px; padding: 2px 1px 1px 2px; }
.resource-tools button { height: 13px; }
.resource-tools .filter { width: 120px; margin-left: auto; }
.resource-panes { display: flex; flex: 1; gap: 3px; }
.box { flex: 1; padding-left: 12px; background: #fff; border: 1px solid #999; }
.tabs { display: flex; height: 11px; }
.tabs button { padding: 0 6px; border-right: 1px solid #d0d0d0; font: 6px/10px "Liberation Serif", serif; color: #000; }
.tabs .open { background: #fff; }

.hint { position: absolute; left: 0; top: 219px; width: 262px; height: 90px; overflow: visible; pointer-events: none; }
.statusbar { height: 11px; }
```
